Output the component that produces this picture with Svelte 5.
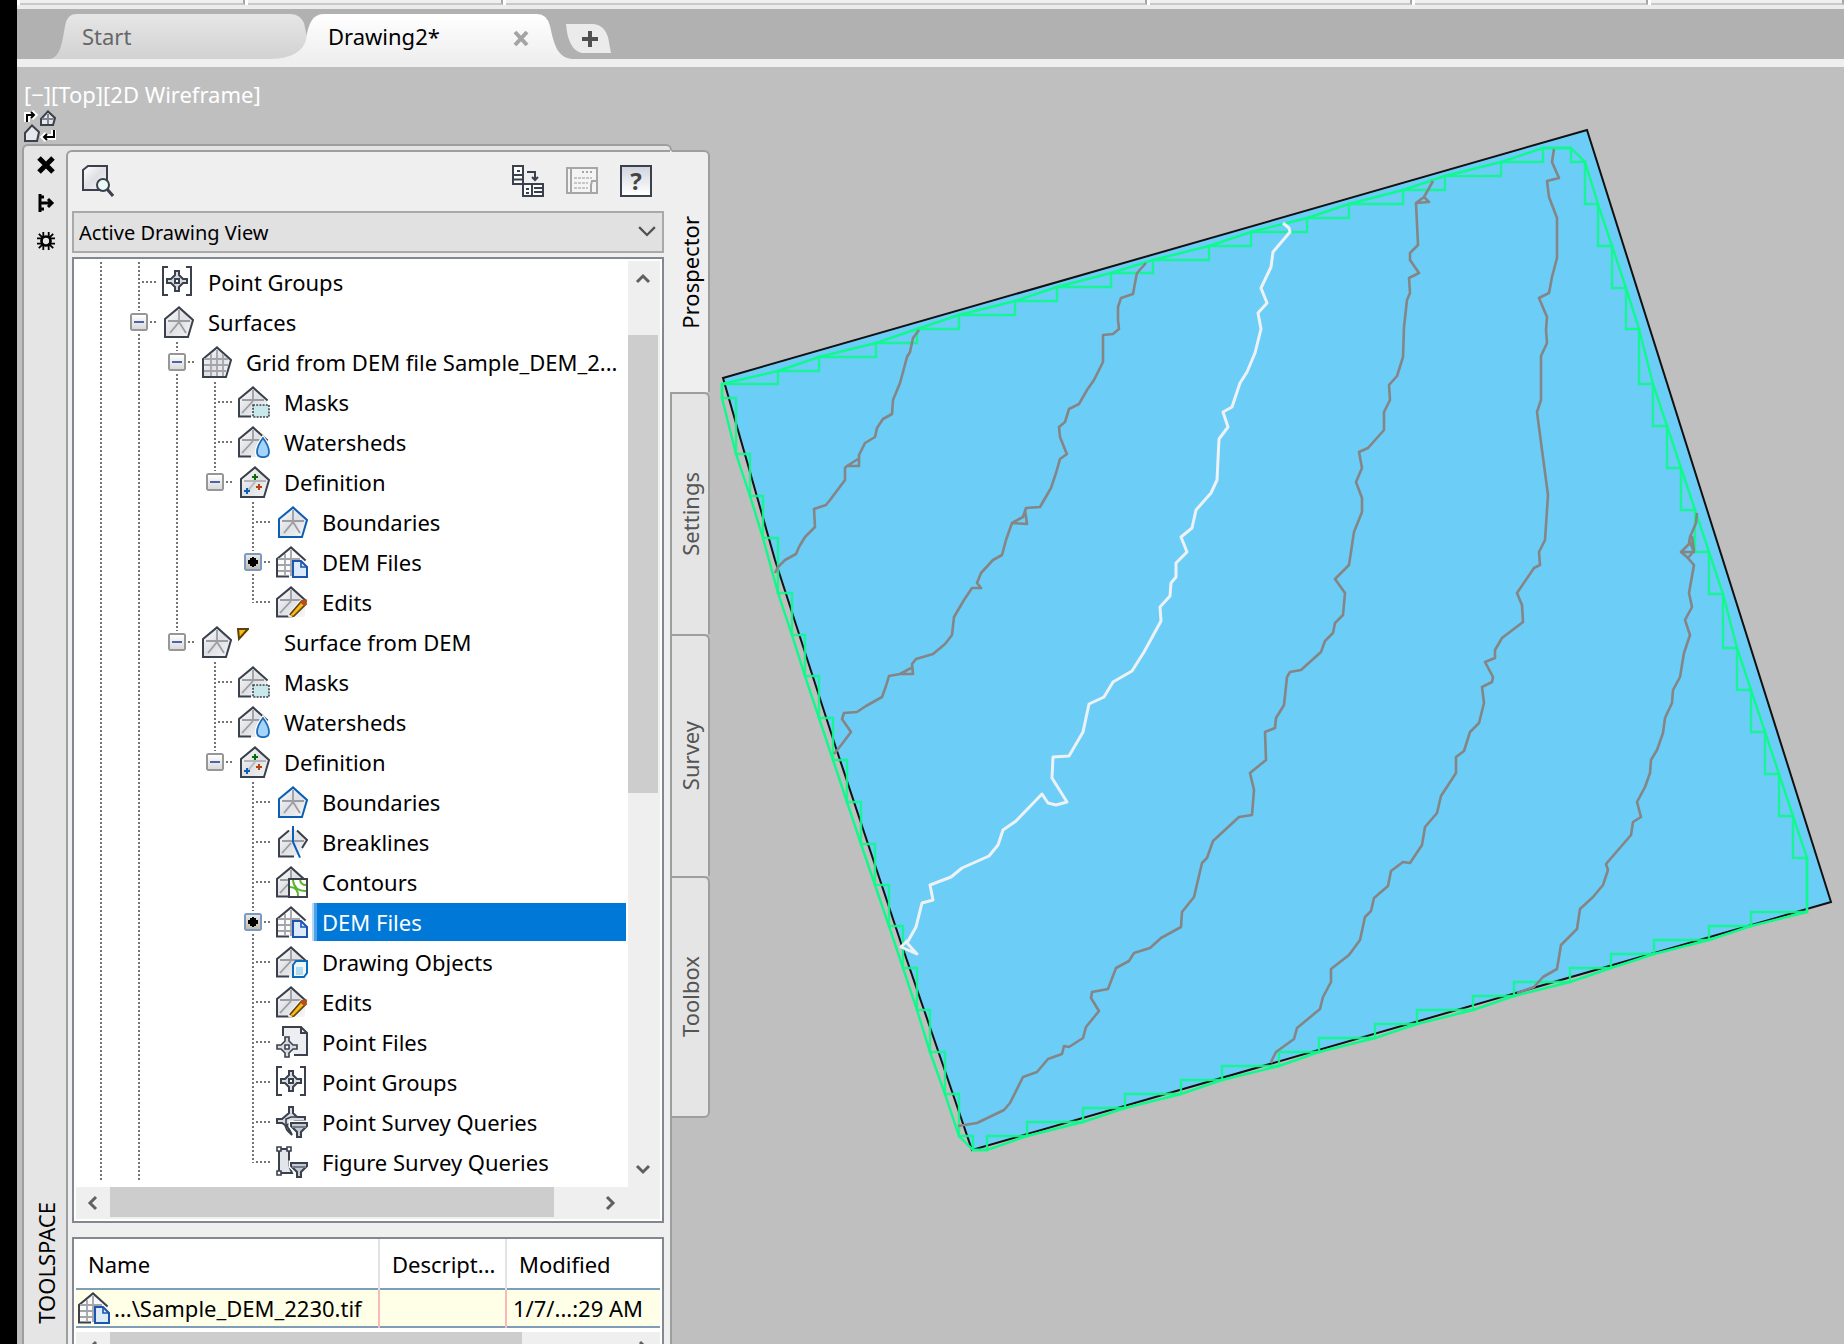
<script lang="ts">
  type Row = { cells: string; icon: string; label: string; flag?: boolean; selected?: boolean };

  // One character per tree column:
  // "|" line, "t" branch, "l" last branch, "-" expander, "m" last expander, "*" pending expander
  const rows: Row[] = [
    { cells: '|t', icon: 'pointGroups', label: 'Point Groups' },
    { cells: '|-', icon: 'surface', label: 'Surfaces' },
    { cells: '||-', icon: 'grid', label: 'Grid from DEM file Sample_DEM_2...' },
    { cells: '|||t', icon: 'masks', label: 'Masks' },
    { cells: '|||t', icon: 'watersheds', label: 'Watersheds' },
    { cells: '|||m', icon: 'definition', label: 'Definition' },
    { cells: '||| t', icon: 'boundaries', label: 'Boundaries' },
    { cells: '||| *', icon: 'dem', label: 'DEM Files' },
    { cells: '||| l', icon: 'edits', label: 'Edits' },
    { cells: '||m', icon: 'surface', label: 'Surface from DEM', flag: true },
    { cells: '|| t', icon: 'masks', label: 'Masks' },
    { cells: '|| t', icon: 'watersheds', label: 'Watersheds' },
    { cells: '|| m', icon: 'definition', label: 'Definition' },
    { cells: '||  t', icon: 'boundaries', label: 'Boundaries' },
    { cells: '||  t', icon: 'breaklines', label: 'Breaklines' },
    { cells: '||  t', icon: 'contours', label: 'Contours' },
    { cells: '||  *', icon: 'dem', label: 'DEM Files', selected: true },
    { cells: '||  t', icon: 'objects', label: 'Drawing Objects' },
    { cells: '||  t', icon: 'edits', label: 'Edits' },
    { cells: '||  t', icon: 'pointFiles', label: 'Point Files' },
    { cells: '||  t', icon: 'pointGroups', label: 'Point Groups' },
    { cells: '||  t', icon: 'pointQueries', label: 'Point Survey Queries' },
    { cells: '||  l', icon: 'figureQueries', label: 'Figure Survey Queries' }
  ];

  const cellClass: Record<string, string> = {
    '|': 'line',
    t: 'line branch',
    l: 'last branch',
    '-': 'line branch',
    m: 'last branch',
    '*': 'line branch',
    ' ': ''
  };

  const sideTabs = ['Prospector', 'Settings', 'Survey', 'Toolbox'];
  let activeTab = $state('Prospector');
  let selectedRow = $state(rows.findIndex((r) => r.selected));

  // Surface boundary: the hull runs through the corners of the raster steps
  const top = [
    [778, 371], [819, 357], [876, 343], [917, 329], [959, 315], [1015, 301], [1057, 287], [1111, 273],
    [1153, 260], [1209, 246], [1251, 232], [1307, 218], [1349, 204], [1403, 190], [1445, 176], [1501, 162],
    [1543, 148], [1571, 148]
  ];
  const right = [
    [1598, 204], [1612, 246], [1626, 288], [1639, 329], [1653, 384], [1667, 426], [1681, 468], [1695, 510],
    [1709, 552], [1723, 594], [1737, 648], [1751, 690], [1765, 732], [1779, 774], [1793, 816], [1807, 858]
  ];
  const bottom = [
    [1751, 926], [1709, 940], [1654, 954], [1611, 968], [1570, 982], [1514, 996], [1473, 1010], [1417, 1024],
    [1375, 1038], [1319, 1052], [1279, 1066], [1222, 1080], [1181, 1094], [1125, 1108], [1083, 1122],
    [1027, 1136], [987, 1150]
  ];
  const left = [
    [959, 1136], [945, 1094], [930, 1052], [917, 1010], [903, 968], [889, 926], [875, 885], [861, 844],
    [847, 802], [833, 760], [819, 718], [805, 676], [792, 635], [778, 593], [763, 538], [750, 496],
    [736, 454], [722, 398]
  ];
  const hv = (pts: number[][]) => pts.map(([x, y]) => `H${x}V${y}`).join('');
  const vh = (pts: number[][]) => pts.map(([x, y]) => `V${y}H${x}`).join('');
  const line = (pts: number[][]) => pts.map(([x, y]) => `L${x} ${y}`).join('');

  const steps = `M722 384${hv(top)}V162H1585${vh(right)}V912${hv(bottom)}H973${vh(left)}Z`;
  const hull = `M722 384${line(top)}L1585 162${line(right)}V912${line(bottom)}H973${line(left)}Z`;

  const contours = [
    'M919 330 913 338 910 352 907 357 903 372 900 383 893 400 892 414 883 419 877 428 875 437 865 443 859 455 859 466 847 466 858 459M847 466 845 468 845 480 830 500 826 505 814 509 815 527 805 537 799 547 796 554 785 560 778 567 775 573',
    'M1146 263 1137 273 1135 283 1133 294 1121 298 1118 307 1118 320 1119 329 1113 334 1103 335 1103 362 1094 380 1087 390 1079 404 1069 409 1065 422 1059 427 1060 437 1066 452 1067 454 1060 459 1056 473 1051 488 1040 507 1026 508 1023 517 1012 523 1027 524 1025 510M1012 523 1006 540 1002 555 993 560 981 573 977 583 981 588 972 588 964 600 954 617 952 635 945 644 933 654 916 659 912 664 913 674 900 674 911 668M900 674 889 676 886 686 882 697 866 706 857 712 844 713 842 719 851 732 842 744 834 754',
    'M1433 181 1428 190 1424 197 1429 202 1416 203 1424 197M1416 203 1418 245 1410 253 1410 260 1419 273 1409 278 1410 293 1407 300 1404 327 1403 357 1397 376 1389 385 1390 400 1384 412 1384 430 1368 448 1359 452 1362 468 1356 482 1362 498 1362 512 1354 532 1349 565 1335 579 1345 593 1343 615 1335 623 1333 633 1325 641 1321 652 1301 670 1290 672 1287 677 1284 705 1276 718 1275 728 1265 732 1266 760 1250 773 1254 790 1252 815 1239 817 1213 841 1207 858 1202 863 1194 897 1182 912 1181 927 1161 938 1150 948 1134 953 1129 961 1116 968 1108 989 1092 992 1091 998 1099 1011 1086 1027 1083 1038 1069 1047 1064 1046 1062 1054 1048 1059 1037 1072 1023 1077 1010 1103 1004 1110 977 1123 958 1126',
    'M1554 149 1552 162 1559 178 1547 181 1549 197 1557 218 1557 258 1552 277 1549 293 1539 298 1547 317 1546 330 1547 343 1541 356 1541 400 1537 412 1542 450 1548 495 1545 540 1539 552 1540 565 1534 568 1517 593 1522 605 1523 622 1502 638 1495 650 1495 658 1485 662 1493 677 1492 682 1482 687 1484 703 1479 723 1470 732 1464 751 1456 757 1456 773 1441 796 1437 813 1425 827 1422 845 1410 863 1403 862 1391 871 1388 886 1374 898 1371 911 1365 917 1360 940 1349 955 1331 969 1331 982 1323 997 1320 1009 1297 1028 1294 1039 1276 1052 1272 1060 1271 1063',
    'M1697 513 1696 523 1690 537 1689 544 1681 552 1694 552 1689 540M1681 552 1688 558 1694 551 1692 536M1686 556 1694 565 1689 593 1692 607 1685 620 1690 635 1684 653 1680 677 1673 690 1672 703 1665 718 1663 733 1657 750 1651 760 1650 773 1645 787 1637 802 1641 817 1633 822 1631 835 1606 864 1608 870 1603 885 1593 897 1580 909 1577 929 1561 945 1557 969 1543 977 1534 987 1517 993'
  ];
  const majorContour =
    'M1283 223 1289 228 1290 232 1273 252 1271 267 1261 288 1267 303 1258 313 1261 329 1255 353 1247 372 1240 383 1232 407 1223 412 1228 427 1219 439 1217 480 1211 493 1196 510 1192 528 1181 537 1187 552 1176 563 1176 577 1171 583 1170 596 1160 607 1161 621 1144 652 1132 671 1113 682 1104 697 1089 704 1083 732 1069 756 1053 757 1052 778 1067 802 1056 805 1048 803 1042 794 1016 821 1003 830 998 845 989 856 962 868 951 877 930 885 933 900 922 903 916 927 907 943 917 954 901 947 908 940';
</script>

{#snippet house(color = '#3a404c')}
  <path d="M1.5 6.5 8.5.7 15.5 7 13 15.5H1.5Z" fill="url(#metal)" stroke={color} />
{/snippet}

{#snippet openHouse()}
  <path d="M.5 6.5 7.5.7 14.5 7V15.5H.5Z" fill="url(#metal)" />
  <path d="M6.5 15.3H.5V6.5L7.5.7 14.8 7.3" fill="none" stroke="#3a404c" />
  <path d="M7.5 2V7M2 7H13M7.5 7.5 2 13.5" fill="none" stroke="#9b9da3" stroke-width=".9" />
{/snippet}

{#snippet funnel()}
  <path d="M7.5 8.5H15.5V10L12.5 13V15.5H10.5V13L7.5 10Z" fill="none" stroke="#fff" stroke-width="2.5" />
  <path d="M7.5 8.5H15.5V10L12.5 13V15.5H10.5V13L7.5 10Z" fill="#c5cad2" stroke="#3a404c" />
  <path d="M8 10.5H15" stroke="#747a86" />
{/snippet}

{#snippet marker()}
  <path d="M6.5 2.5H8.5V4.5L10.5 6.5H12.5V8.5H10.5L8.5 10.5V12.5H6.5V10.5L4.5 8.5H2.5V6.5H4.5L6.5 4.5Z" fill="#d8dbe2" stroke="#3a404c" />
  <path d="M6.5 6.5H8.5V8.5H6.5Z" fill="#fff" stroke="#3a404c" />
{/snippet}

{#snippet treeIcon(name: string)}
  <svg class="icon" viewBox="0 0 16 16" aria-hidden="true">
    {#if name === 'surface' || name === 'boundaries'}
      {@render house(name === 'boundaries' ? '#0a5fb5' : undefined)}
      <path d="M8.5 2V7.5M3 7.5H14M8.5 8 4 13.5M8.5 8 12 13.5" fill="none" stroke="#9b9da3" stroke-width=".9" />
    {:else if name === 'grid'}
      {@render house()}
      <path d="M5.5 4V15M8.5 2V15M11.5 4V15M2 6.5H14M2 9.5H14M2 12.5H13" fill="none" stroke="#a3a5aa" stroke-width=".9" />
    {:else if name === 'definition'}
      {@render house()}
      <path d="M3 7.5H14M8.5 8 4 13.5" stroke="#b4b6bb" stroke-width=".9" />
      <path d="M8.5 4V7M7 5.5H10" stroke="#0a6a0a" />
      <path d="M10.5 9V12M9 10.5H12" stroke="#b8400c" />
      <path d="M4.5 11V14M3 12.5H6" stroke="#0a5fb5" />
    {:else if name === 'breaklines'}
      <path d="M1.5 6.5 8.5.7 15.5 7 13 12.5 9 15.5H1.5Z" fill="url(#metal)" />
      <path d="M6.5 2.3 1.5 6.5V15.3H9M10.5 2.3 15.5 7 13 11" fill="none" stroke="#3a404c" />
      <path d="M3 7.5H14M7.5 8.5 3 13.5" stroke="#9b9da3" stroke-width=".9" />
      <path d="M8.5 0V8L12 15.8" fill="none" stroke="#0a5fb5" />
    {:else if name === 'masks'}
      {@render openHouse()}
      <path d="M7 9H16V16H7Z" fill="#fff" />
      <path d="M7.5 9.5H15.5V15.5H7.5Z" fill="#c8e8ec" stroke="#3a404c" stroke-dasharray="1 .6" stroke-width=".8" />
    {:else if name === 'watersheds'}
      {@render openHouse()}
      <path d="M12.5 6Q9.5 10 9.5 13Q9.5 15.6 12.5 15.6T15.5 13Q15.5 10 12.5 6Z" fill="#a5d4fb" stroke="#fff" stroke-width="2" />
      <path d="M12.5 6Q9.5 10 9.5 13Q9.5 15.6 12.5 15.6T15.5 13Q15.5 10 12.5 6Z" fill="#a5d4fb" stroke="#1e6cb5" stroke-width=".9" />
    {:else if name === 'dem'}
      <path d="M.5 6.5 7.5.7 14.5 7V15.5H.5Z" fill="#fafafb" />
      <path d="M6.5 15.3H.5V6.5L7.5.7 14.8 7.3" fill="none" stroke="#3a404c" />
      <path d="M4.5 4V15M7.5 2V15M1 6.5H12M1 9.5H8M1 12.5H8" fill="none" stroke="#a3a5aa" stroke-width=".9" />
      <path d="M8.5 7.5H12.5L15.5 10.5V15.5H8.5Z" fill="#dceafb" stroke="#1c55b0" />
      <path d="M12.5 7.5V10.5H15.5" fill="none" stroke="#1c55b0" stroke-width=".8" />
    {:else if name === 'edits'}
      {@render openHouse()}
      <path d="M12.5 6.5 6 14.5 6.5 16 9.5 15.5 15.5 8.5Z" fill="#fff" />
      <path d="M12.8 7.5 7 14.2 6.7 15.6 9 15 15 9Z" fill="#f9b81a" stroke="#5f4310" stroke-width=".8" />
      <path d="M12.7 7 15.6 6.7 15.3 9.2 14 10 12 8Z" fill="#b5501c" />
      <path d="M6.2 14 8.6 15.6 6.3 16Z" fill="#e8e8e8" />
    {:else if name === 'contours'}
      {@render openHouse()}
      <path d="M6.5 6.5H15.5V15.5H6.5Z" fill="#fff" stroke="#3a404c" />
      <path d="M7 10.5Q11 10.5 11 15M8.5 7Q9 12.5 15 12.5M12 7Q12.5 9.5 15 9.5" fill="none" stroke="#5cb52c" />
    {:else if name === 'objects'}
      {@render openHouse()}
      <path d="M8.5 9.5 10 7.5H15.5V13.5L14 15.5H8.5Z" fill="#eaf7fc" stroke="#0a6cb8" />
      <path d="M10 10.5H13.5V14.5H10Z" fill="#b2dced" />
    {:else if name === 'pointGroups'}
      {@render marker()}
      <path d="M3 .5H.5V14.5H3M12 .5H14.5V14.5H12" fill="none" stroke="#3a404c" />
    {:else if name === 'pointFiles'}
      <path d="M3.5 5V.5H12.5L15.5 3.5V14.5H9" fill="#eceef1" stroke="#3a404c" />
      <path d="M12.5 .5V3.5H15.5" fill="none" stroke="#3a404c" />
      <path d="M4.5 5.5H6.5V7.5L8.5 9.5H10.5V11.5H8.5L6.5 13.5V15.5H4.5V13.5L2.5 11.5H.5V9.5H2.5L4.5 7.5Z" fill="#d8dbe2" stroke="#3a404c" stroke-width=".8" />
      <path d="M4.5 9.5H6.5V11.5H4.5Z" fill="#fff" stroke="#3a404c" stroke-width=".8" />
    {:else if name === 'pointQueries'}
      <path d="M6.5 .5H8.5V3.5L10.5 5.5H14.5V7.5H9.5L5.5 9.5 8 14.5 5.5 12 4.5 9.5 3 8.5H.5V6.5H3L6.5 3.5Z" fill="#d8dbe2" stroke="#3a404c" />
      <path d="M5 9V6.5L7.5 5.5H10" fill="none" stroke="#3a404c" stroke-width=".8" />
      {@render funnel()}
    {:else if name === 'figureQueries'}
      <path d="M1.5 1.5H6.5V9.5L8 13.5H1.5Z" fill="#e2e5ea" stroke="#3a404c" />
      <path d="M.5 .5H2.5V2.5H.5ZM5.5 .5H7.5V2.5H5.5ZM.5 12.5H2.5V14.5H.5Z" fill="#fff" stroke="#3a404c" stroke-width=".8" />
      {@render funnel()}
    {/if}
  </svg>
{/snippet}

{#snippet chevron(d: string, label: string)}
  <button class="arrow" aria-label={label}>
    <svg viewBox="0 0 16 16"><path {d} fill="none" stroke="#606060" stroke-width="3" /></svg>
  </button>
{/snippet}

<svg class="defs" aria-hidden="true">
  <linearGradient id="metal" x2="1" y2="1">
    <stop offset="0" stop-color="#fff" />
    <stop offset=".5" stop-color="#dfe0e4" />
    <stop offset="1" stop-color="#f8f8f9" />
  </linearGradient>
  <linearGradient id="idleTab" x2="0" y2="1">
    <stop offset="0" stop-color="#e6e6e6" />
    <stop offset="1" stop-color="#d2d2d2" />
  </linearGradient>
  <linearGradient id="openTab" x2="0" y2="1">
    <stop offset="0" stop-color="#fff" />
    <stop offset="1" stop-color="#efefef" />
  </linearGradient>
</svg>

<div class="app">
  <div class="edge"></div>
  <main>
    <div class="ribbon">
      <i></i><i></i><i></i><i></i><i></i><i></i>
    </div>

    <nav class="tabs">
      <button class="tab start">
        <svg viewBox="0 0 258 45"><path d="M0 45C10 43 12 30 15 12Q17 0 26 0H240Q250 0 254 9L258 28Q252 43 226 45Z" fill="url(#idleTab)" /></svg>
        <span>Start</span>
      </button>
      <button class="tab open">
        <svg viewBox="0 0 310 45">
          <path d="M0 45Q30 44 35 26Q38 0 52 0H266Q276 0 279 12C283 30 286 44 302 45Z" fill="url(#openTab)" />
          <path d="M244 18 256 31M256 18 244 31" stroke="#a4a4a4" stroke-width="4" />
        </svg>
        <span>Drawing2*</span>
      </button>
      <button class="tab add" aria-label="New drawing">
        <svg viewBox="0 0 46 29">
          <path d="M0 0H28Q38 1 42 13L45 29H16Q2 26 0 0Z" fill="#ebebeb" />
          <path d="M24 7V23M16 15H32" stroke="#505050" stroke-width="4" />
        </svg>
      </button>
    </nav>

    <section class="viewport">
      <div class="dock">
        <div class="view-label">[−][Top][2D Wireframe]</div>
        <svg class="quick" viewBox="0 0 16 16" aria-hidden="true">
          <path d="M1.5 6V2.5H5M3.5 1 5 2.5 3.5 4M15 10V13.5H10M11.5 12 10 13.5 11.5 15" fill="none" stroke="#fff" stroke-width="3" />
          <path d="M1.5 6V2.5H5M3.5 1 5 2.5 3.5 4M15 10V13.5H10M11.5 12 10 13.5 11.5 15" fill="none" stroke="#000" />
          <path d="M8.5 4.5 12 .7 15.5 4 14.5 7.5H8.5ZM.5 11.5 4 7.7 7.5 11 6.5 15.5H.5Z" fill="#e6e8ec" stroke="#3a404c" />
          <path d="M9 4.5H15M12 2V7" stroke="#808692" />
        </svg>

        <div class="palette">
          <div class="shell">
            <div class="rail">
              <button aria-label="Close">
                <svg viewBox="0 0 18 18"><path d="M2 2 16 16M16 2 2 16" stroke="#000" stroke-width="5" /></svg>
              </button>
              <button aria-label="Auto-hide">
                <svg viewBox="0 0 18 18"><path d="M3 0V18M2 3H7M2 15H7M3 9H15M11 5 15 9 11 13" fill="none" stroke="#000" stroke-width="3" /></svg>
              </button>
              <button aria-label="Properties">
                <svg viewBox="0 0 20 20">
                  <circle cx="10" cy="10" r="5" fill="none" stroke="#000" stroke-width="3" />
                  <path d="M7 0V6M13 0V6M7 14V20M13 14V20M0 7H6M0 13H6M14 7H20M14 13H20M2 2 6 6M18 2 14 6M2 18 6 14M18 18 14 14" stroke="#000" stroke-width="2" />
                </svg>
              </button>
              <h1>TOOLSPACE</h1>
            </div>

            <div class="panel">
              <div class="toolbar">
                <button class="find" aria-label="Item view">
                  <svg viewBox="0 0 16 16">
                    <path d="M.5 2.5 3 .5H12.5V9L10 12.5H.5Z" fill="url(#metal)" stroke="#3a404c" />
                    <circle cx="10.5" cy="10" r="3" fill="#eafaf6" stroke="#3a404c" />
                    <path d="M12.5 12 15.5 15.5" stroke="#3a404c" stroke-width="1.5" />
                  </svg>
                </button>
                <button aria-label="Panorama">
                  <svg viewBox="0 0 16 16">
                    <path d="M.5 .5H5.5V9.5H.5ZM.5 5H5.5M2.5 3H4M.5 7.2H5.5M5.5 9.5H15.5V15.5H5.5ZM10 9.5V15.5M7 12H8.5M7 14H8.5M11 11.5H15M11 13.5H15" fill="#fafbfc" stroke="#3a404c" />
                    <path d="M7.5 3.5H11.5V7M10 6 11.5 7.5 13 6" fill="none" stroke="#3a404c" />
                  </svg>
                </button>
                <button aria-label="Preview" disabled>
                  <svg viewBox="0 0 16 16">
                    <path d="M.5 1.5H15.5V14H.5Z" fill="#f4f4f4" stroke="#a6a6a6" />
                    <path d="M2.5 2V14M8 3.5H9M10 3.5H11M12 3.5H13M13 8H15.5V14H12.5V10Z" fill="none" stroke="#a6a6a6" />
                    <path d="M4 6.5H13M4 9H11M4 11.5H11" stroke="#c6c6c6" stroke-dasharray="1.5 .5" />
                  </svg>
                </button>
                <button class="help" aria-label="Help"><span>?</span></button>
              </div>

              <div class="view-select">
                <select aria-label="View">
                  <option>Active Drawing View</option>
                </select>
                <svg viewBox="0 0 16 10" aria-hidden="true"><path d="M1 1 8 8 15 1" fill="none" stroke="#505050" stroke-width="2" /></svg>
              </div>

              <div class="tree-box">
                <div class="tree" role="tree">
                  {#each rows as row, i}
                    <div class="row" role="treeitem" aria-selected={i === selectedRow}>
                      {#each row.cells as cell}
                        <span class="cell {cellClass[cell]}">
                          {#if cell === '-' || cell === 'm' || cell === '*'}
                            <button class="expander" class:pending={cell === '*'} aria-label="Toggle {row.label}"></button>
                          {/if}
                        </span>
                      {/each}
                      {@render treeIcon(row.icon)}
                      {#if row.flag}
                        <svg class="flag" viewBox="0 0 12 14" aria-hidden="true"><path d="M1 1H11L2 11Z" fill="#fdb813" stroke="#5a4208" stroke-width="2" /></svg>
                      {/if}
                      <button class="label" class:selected={i === selectedRow} onclick={() => (selectedRow = i)}>{row.label}</button>
                    </div>
                  {/each}
                </div>
                <div class="scroll vertical">
                  {@render chevron('M2 11 8 5 14 11', 'Scroll up')}
                  <div class="thumb"></div>
                  {@render chevron('M2 5 8 11 14 5', 'Scroll down')}
                </div>
                <div class="scroll horizontal">
                  {@render chevron('M11 2 5 8 11 14', 'Scroll left')}
                  <div class="thumb"></div>
                  {@render chevron('M5 2 11 8 5 14', 'Scroll right')}
                </div>
              </div>

              <div class="list-box">
                <table>
                  <thead>
                    <tr><th>Name</th><th>Descript...</th><th>Modified</th></tr>
                  </thead>
                  <tbody>
                    <tr>
                      <td><div class="file">{@render treeIcon('dem')}...\Sample_DEM_2230.tif</div></td>
                      <td></td>
                      <td>1/7/...:29 AM</td>
                    </tr>
                  </tbody>
                </table>
                <div class="scroll horizontal list-scroll">
                  {@render chevron('M11 2 5 8 11 14', 'Scroll list left')}
                  <div class="thumb"></div>
                  {@render chevron('M5 2 11 8 5 14', 'Scroll list right')}
                </div>
              </div>
            </div>
          </div>

          <div class="side-tabs" role="tablist">
            {#each sideTabs as tab}
              <button role="tab" aria-selected={tab === activeTab} class:active={tab === activeTab} onclick={() => (activeTab = tab)}>
                <span>{tab}</span>
              </button>
            {/each}
          </div>
        </div>
      </div>

      <svg class="drawing" viewBox="710 67 1134 1277" preserveAspectRatio="xMinYMin meet" role="img" aria-label="DEM surface">
        <path
          d="M723 378 1587 130 1831 902 972 1150 945 1071 901 943 836 748 788 600 775 560 750 472Z"
          fill="#6ccdf7"
          stroke="#111"
          stroke-width="2"
        />
        <g fill="none" stroke="#0ffa8c" stroke-width="2.4">
          <path d={steps} stroke-opacity=".9" />
          <path d={hull} />
        </g>
        <g fill="none" stroke="#858585" stroke-width="2.6" stroke-linejoin="round">
          {#each contours as d}
            <path {d} />
          {/each}
        </g>
        <path d={majorContour} fill="none" stroke="#eef2f6" stroke-width="3" stroke-linejoin="round" />
      </svg>
    </section>
  </main>
</div>

<style>
  :global(body) {
    margin: 0;
    background: #bfbfbf;
  }

  .app {
    display: flex;
    height: 100vh;
    overflow: hidden;
    font-family: 'Noto Sans', 'Open Sans', sans-serif;
    font-size: 22px;
    color: #000;
  }

  button {
    margin: 0;
    padding: 0;
    border: none;
    background: none;
    font: inherit;
    color: inherit;
    cursor: pointer;
  }

  svg {
    display: block;
  }

  .defs {
    position: absolute;
    width: 0;
    height: 0;
  }

  .edge {
    flex: none;
    width: 17px;
    background: #000;
  }

  main {
    flex: 1;
    min-width: 0;
    display: flex;
    flex-direction: column;
  }

  /* Bottom edge of the ribbon panels */
  .ribbon {
    flex: none;
    height: 5px;
    display: grid;
    grid-template-columns: 228px 258px 644px 265px 236px 1fr;
    background: #fff;
    border-bottom: 4px solid #ececec;
  }

  .ribbon i {
    margin-left: 3px;
    background: #efefef;
    border-bottom: 2px solid #c9c9c9;
    border-right: 2px solid #a6a6a6;
  }

  .tabs {
    flex: none;
    height: 50px;
    display: flex;
    align-items: flex-end;
    background: #b1b1b1;
    border-bottom: 8px solid #efefef;
  }

  .tab {
    display: grid;
    align-items: center;
    text-align: left;
    line-height: 45px;
  }

  .tab > * {
    grid-area: 1 / 1;
  }

  .tab svg {
    width: 100%;
  }

  .start {
    width: 258px;
    margin-left: 33px;
    color: #666;
  }

  .start span {
    padding-left: 32px;
  }

  .open {
    width: 310px;
    margin-left: -37px;
  }

  .open span {
    padding-left: 57px;
  }

  .add {
    width: 46px;
    margin: 0 0 6px -15px;
  }

  .viewport {
    flex: 1;
    min-height: 0;
    display: flex;
    background: #bfbfbf;
  }

  .drawing {
    flex: 1;
    min-width: 0;
    height: 100%;
  }

  .dock {
    flex: none;
    width: 693px;
    display: flex;
    flex-direction: column;
  }

  .view-label {
    padding: 11px 0 0 7px;
    line-height: 32px;
    color: #fff;
  }

  .quick {
    flex: none;
    width: 32px;
    height: 32px;
    margin-left: 7px;
  }

  .palette {
    flex: 1;
    min-height: 0;
    display: flex;
    margin: 2px 0 0 5px;
  }

  .shell {
    flex: 1;
    display: flex;
    border: 2px solid #9e9e9e;
    border-bottom: none;
    border-radius: 6px 6px 0 0;
    background: #e5e5e5;
  }

  .rail {
    flex: none;
    width: 42px;
    display: flex;
    flex-direction: column;
    align-items: center;
    gap: 20px;
    padding: 10px 0 20px 2px;
    box-sizing: border-box;
  }

  .rail svg {
    width: 18px;
    height: 18px;
  }

  h1 {
    margin: auto 0 0;
    font-size: 22px;
    font-weight: 400;
    line-height: 28px;
    writing-mode: vertical-rl;
    transform: rotate(180deg);
  }

  .panel {
    flex: 1;
    min-width: 0;
    margin-top: 4px;
    padding: 13px 6px 0 4px;
    border: 2px solid #9e9e9e;
    border-width: 2px 0 0 2px;
    border-radius: 6px 0 0 0;
    background: #efefef;
  }

  .toolbar {
    display: flex;
    gap: 22px;
    padding: 0 12px 0 10px;
  }

  .toolbar svg {
    width: 32px;
    height: 32px;
  }

  .find {
    margin-right: auto;
  }

  .help {
    width: 32px;
    height: 32px;
    border: 2px solid #3a404c;
    background: linear-gradient(#d0d5dd, #fff);
    font-size: 24px;
    font-weight: 700;
    line-height: 28px;
    color: #444;
  }

  .view-select {
    display: grid;
    align-items: center;
    margin-top: 14px;
  }

  .view-select > * {
    grid-area: 1 / 1;
  }

  .view-select svg {
    justify-self: end;
    width: 18px;
    margin-right: 8px;
    pointer-events: none;
  }

  select {
    appearance: none;
    width: 100%;
    height: 42px;
    padding: 0 5px;
    border: 2px solid #a9a9a9;
    border-radius: 0;
    background: #e1e1e1;
    font: inherit;
    font-size: 20px;
    color: #000;
  }

  .tree-box {
    display: grid;
    grid-template-columns: 1fr 32px;
    margin-top: 4px;
    padding: 2px;
    border: 2px solid #828790;
    background: #fff;
  }

  .tree {
    padding: 1px 2px 5px 6px;
    min-width: 0;
    overflow: hidden;
  }

  .row {
    display: flex;
    align-items: center;
    height: 40px;
  }

  .cell {
    flex: none;
    width: 38px;
    height: 40px;
    display: grid;
    place-items: center;
    background-repeat: no-repeat;
    background-position: 18px 0, 22px 19px;
    background-size: 0 0;
    background-image:
      repeating-linear-gradient(#747474 0 2px, transparent 2px 4px),
      repeating-linear-gradient(90deg, #747474 0 2px, transparent 2px 4px);
  }

  .line {
    background-size: 2px 100%, 0 0;
  }

  .line.branch {
    background-size: 2px 100%, 16px 2px;
  }

  .last.branch {
    background-size: 2px 21px, 16px 2px;
  }

  .expander {
    width: 18px;
    height: 18px;
    border: 2px solid #979797;
    border-radius: 2px;
    outline: 2px solid #fff;
    background:
      linear-gradient(#4b63a7, #4b63a7) center / 10px 2px no-repeat,
      linear-gradient(#fff, #d9d9d9);
  }

  .expander.pending {
    border-color: #7a9abf;
    background:
      linear-gradient(#000, #000) center / 10px 4px no-repeat,
      linear-gradient(#000, #000) center / 6px 8px no-repeat,
      linear-gradient(#000, #000) center / 2px 10px no-repeat,
      linear-gradient(#e8e8e8, #c4bbaa);
  }

  .icon {
    flex: none;
    width: 32px;
    height: 32px;
    margin-left: 4px;
  }

  .flag {
    width: 12px;
    height: 14px;
    margin: 0 29px 14px 5px;
  }

  .label {
    flex: 1;
    min-width: 0;
    height: 38px;
    margin-left: 4px;
    padding-left: 10px;
    overflow: hidden;
    text-align: left;
    white-space: nowrap;
  }

  .flag + .label {
    margin-left: 0;
    padding-left: 6px;
  }

  .label.selected {
    background: linear-gradient(90deg, #b5d8f5 0 2px, #4da1e8 2px 5px, #0078d7 5px);
    color: #fff;
  }

  .scroll {
    display: flex;
    background: #efefef;
  }

  .thumb {
    background: #cdcdcd;
  }

  .arrow {
    flex: none;
    display: grid;
    place-items: center;
    width: 34px;
    height: 32px;
  }

  .arrow svg {
    width: 16px;
    height: 16px;
  }

  .vertical {
    flex-direction: column;
    align-items: flex-start;
    gap: 38px;
  }

  .vertical .arrow {
    width: 30px;
    height: 36px;
  }

  .vertical .thumb {
    width: 30px;
    height: 458px;
  }

  .vertical .arrow:last-child {
    margin-top: auto;
  }

  .horizontal {
    grid-column: 1 / -1;
    padding-right: 33px;
  }

  .horizontal .thumb {
    width: 444px;
    height: 30px;
  }

  .horizontal .arrow:last-child {
    margin-left: auto;
  }

  .list-box {
    margin-top: 14px;
    padding: 0 2px;
    border: 2px solid #828790;
    background: #fff;
  }

  table {
    width: 100%;
    table-layout: fixed;
    border-collapse: collapse;
  }

  th,
  td {
    box-sizing: border-box;
    padding: 0 0 0 6px;
    border-right: 2px solid #f7b9b9;
    text-align: left;
    font-weight: 400;
    white-space: nowrap;
  }

  th {
    height: 50px;
    padding-left: 12px;
    border-color: #e2e2e2;
  }

  th:nth-child(1) {
    width: 303px;
  }

  th:nth-child(2) {
    width: 127px;
  }

  th:last-child,
  td:last-child {
    border-right: none;
  }

  td {
    height: 38px;
  }

  td:first-child {
    padding-left: 0;
  }

  tbody tr {
    border: 2px solid #7f9db9;
    border-width: 2px 0;
    background: #ffffe8;
  }

  .file {
    display: flex;
    align-items: center;
    gap: 4px;
  }

  .file .icon {
    margin-left: 2px;
  }

  .list-scroll {
    margin-top: 4px;
    padding-right: 0;
  }

  .list-scroll .thumb {
    width: 412px;
  }

  .side-tabs {
    flex: none;
    width: 40px;
    margin: 6px 0 0 -2px;
  }

  .side-tabs button {
    display: grid;
    place-items: center;
    width: 40px;
    height: 242px;
    border: 2px solid #9e9e9e;
    border-bottom: none;
    border-radius: 0 6px 0 0;
    background: #e5e5e5;
    color: #555;
  }

  .side-tabs button.active {
    border-left-color: #efefef;
    background: #efefef;
    color: #000;
  }

  .side-tabs button:last-child {
    border-bottom: 2px solid #9e9e9e;
    border-radius: 0 6px 6px 0;
  }

  .side-tabs span {
    writing-mode: vertical-rl;
    transform: rotate(180deg);
  }
</style>
